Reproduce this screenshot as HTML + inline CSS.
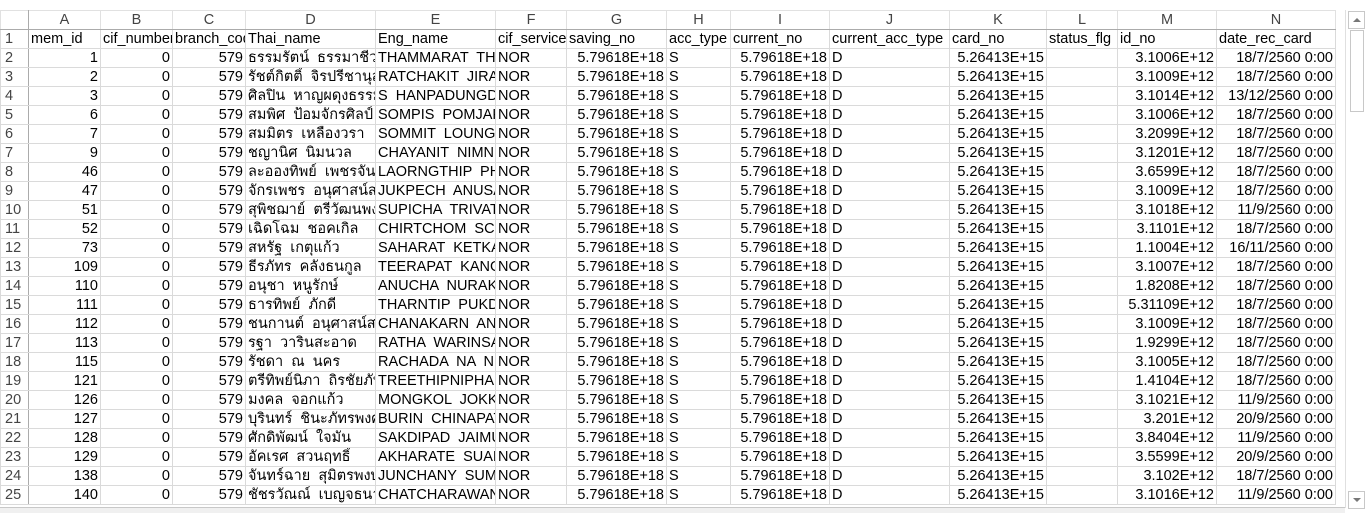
<!DOCTYPE html>
<html><head><meta charset="utf-8"><style>
html,body{margin:0;height:512px;}
body{background:#fff;width:1366px;overflow:hidden;position:relative;font-family:"Liberation Sans","Noto Sans CJK SC",sans-serif;}
table{position:absolute;left:0;top:10px;border-collapse:collapse;table-layout:fixed;width:1335px;font-size:14.5px;color:#000;}
td{height:18px;padding:0 2px;border:1px solid #dadada;white-space:pre;overflow:hidden;line-height:18px;}
tr.h td{background:#fff;color:#444;text-align:center;height:17px;border-color:#e1e1e1;border-bottom:1px solid #ababab;}
td.rh{color:#444;text-align:left;padding-left:4px;border-right:1px solid #ababab;}
.r{text-align:right}
#vs{position:absolute;left:1345px;top:10px;width:20px;height:498px;background:#fff;border-left:1px solid #e0e0e0}
#bar{position:absolute;left:0;top:507px;width:1345px;height:5px;background:#f0f0f0;border-top:1px solid #c8c8c8}
</style></head><body>
<table>
<colgroup><col style="width:28px"><col style="width:72px"><col style="width:72px"><col style="width:73px"><col style="width:130px"><col style="width:120px"><col style="width:71px"><col style="width:100px"><col style="width:64px"><col style="width:99px"><col style="width:120px"><col style="width:97px"><col style="width:71px"><col style="width:99px"><col style="width:119px"></colgroup>
<tr class="h"><td style="border-right:1px solid #ababab"></td><td>A</td><td>B</td><td>C</td><td>D</td><td>E</td><td>F</td><td>G</td><td>H</td><td>I</td><td>J</td><td>K</td><td>L</td><td>M</td><td>N</td></tr>
<tr><td class="rh">1</td><td>mem_id</td><td>cif_number</td><td>branch_code</td><td>Thai_name</td><td>Eng_name</td><td>cif_service</td><td>saving_no</td><td>acc_type</td><td>current_no</td><td>current_acc_type</td><td>card_no</td><td>status_flg</td><td>id_no</td><td>date_rec_card</td></tr>
<tr><td class="rh">2</td><td class="r">1</td><td class="r">0</td><td class="r">579</td><td>ธรรมรัตน์  ธรรมาชีวะ</td><td>THAMMARAT  THAMMA</td><td>NOR</td><td class="r">5.79618E+18</td><td>S</td><td class="r">5.79618E+18</td><td>D</td><td class="r">5.26413E+15</td><td></td><td class="r">3.1006E+12</td><td class="r">18/7/2560 0:00</td></tr>
<tr><td class="rh">3</td><td class="r">2</td><td class="r">0</td><td class="r">579</td><td>รัชต์กิตติ์  จิรปรีชานุสรณ์</td><td>RATCHAKIT  JIRAP</td><td>NOR</td><td class="r">5.79618E+18</td><td>S</td><td class="r">5.79618E+18</td><td>D</td><td class="r">5.26413E+15</td><td></td><td class="r">3.1009E+12</td><td class="r">18/7/2560 0:00</td></tr>
<tr><td class="rh">4</td><td class="r">3</td><td class="r">0</td><td class="r">579</td><td>ศิลปิน  หาญผดุงธรรม</td><td>S  HANPADUNGDH</td><td>NOR</td><td class="r">5.79618E+18</td><td>S</td><td class="r">5.79618E+18</td><td>D</td><td class="r">5.26413E+15</td><td></td><td class="r">3.1014E+12</td><td class="r">13/12/2560 0:00</td></tr>
<tr><td class="rh">5</td><td class="r">6</td><td class="r">0</td><td class="r">579</td><td>สมพิศ  ป้อมจักรศิลป์</td><td>SOMPIS  POMJAKS</td><td>NOR</td><td class="r">5.79618E+18</td><td>S</td><td class="r">5.79618E+18</td><td>D</td><td class="r">5.26413E+15</td><td></td><td class="r">3.1006E+12</td><td class="r">18/7/2560 0:00</td></tr>
<tr><td class="rh">6</td><td class="r">7</td><td class="r">0</td><td class="r">579</td><td>สมมิตร  เหลืองวรา</td><td>SOMMIT  LOUNGW</td><td>NOR</td><td class="r">5.79618E+18</td><td>S</td><td class="r">5.79618E+18</td><td>D</td><td class="r">5.26413E+15</td><td></td><td class="r">3.2099E+12</td><td class="r">18/7/2560 0:00</td></tr>
<tr><td class="rh">7</td><td class="r">9</td><td class="r">0</td><td class="r">579</td><td>ชญานิศ  นิ่มนวล</td><td>CHAYANIT  NIMN</td><td>NOR</td><td class="r">5.79618E+18</td><td>S</td><td class="r">5.79618E+18</td><td>D</td><td class="r">5.26413E+15</td><td></td><td class="r">3.1201E+12</td><td class="r">18/7/2560 0:00</td></tr>
<tr><td class="rh">8</td><td class="r">46</td><td class="r">0</td><td class="r">579</td><td>ละอองทิพย์  เพชรจันทร์</td><td>LAORNGTHIP  PH</td><td>NOR</td><td class="r">5.79618E+18</td><td>S</td><td class="r">5.79618E+18</td><td>D</td><td class="r">5.26413E+15</td><td></td><td class="r">3.6599E+12</td><td class="r">18/7/2560 0:00</td></tr>
<tr><td class="rh">9</td><td class="r">47</td><td class="r">0</td><td class="r">579</td><td>จักรเพชร  อนุศาสน์สกุล</td><td>JUKPECH  ANUSA</td><td>NOR</td><td class="r">5.79618E+18</td><td>S</td><td class="r">5.79618E+18</td><td>D</td><td class="r">5.26413E+15</td><td></td><td class="r">3.1009E+12</td><td class="r">18/7/2560 0:00</td></tr>
<tr><td class="rh">10</td><td class="r">51</td><td class="r">0</td><td class="r">579</td><td>สุพิชฌาย์  ตรีวัฒนพงศ์</td><td>SUPICHA  TRIVAT</td><td>NOR</td><td class="r">5.79618E+18</td><td>S</td><td class="r">5.79618E+18</td><td>D</td><td class="r">5.26413E+15</td><td></td><td class="r">3.1018E+12</td><td class="r">11/9/2560 0:00</td></tr>
<tr><td class="rh">11</td><td class="r">52</td><td class="r">0</td><td class="r">579</td><td>เฉิดโฉม  ชอคเกิล</td><td>CHIRTCHOM  SCH</td><td>NOR</td><td class="r">5.79618E+18</td><td>S</td><td class="r">5.79618E+18</td><td>D</td><td class="r">5.26413E+15</td><td></td><td class="r">3.1101E+12</td><td class="r">18/7/2560 0:00</td></tr>
<tr><td class="rh">12</td><td class="r">73</td><td class="r">0</td><td class="r">579</td><td>สหรัฐ  เกตุแก้ว</td><td>SAHARAT  KETKA</td><td>NOR</td><td class="r">5.79618E+18</td><td>S</td><td class="r">5.79618E+18</td><td>D</td><td class="r">5.26413E+15</td><td></td><td class="r">1.1004E+12</td><td class="r">16/11/2560 0:00</td></tr>
<tr><td class="rh">13</td><td class="r">109</td><td class="r">0</td><td class="r">579</td><td>ธีรภัทร  คลังธนกูล</td><td>TEERAPAT  KANG</td><td>NOR</td><td class="r">5.79618E+18</td><td>S</td><td class="r">5.79618E+18</td><td>D</td><td class="r">5.26413E+15</td><td></td><td class="r">3.1007E+12</td><td class="r">18/7/2560 0:00</td></tr>
<tr><td class="rh">14</td><td class="r">110</td><td class="r">0</td><td class="r">579</td><td>อนุชา  หนูรักษ์</td><td>ANUCHA  NURAK</td><td>NOR</td><td class="r">5.79618E+18</td><td>S</td><td class="r">5.79618E+18</td><td>D</td><td class="r">5.26413E+15</td><td></td><td class="r">1.8208E+12</td><td class="r">18/7/2560 0:00</td></tr>
<tr><td class="rh">15</td><td class="r">111</td><td class="r">0</td><td class="r">579</td><td>ธารทิพย์  ภักดี</td><td>THARNTIP  PUKD</td><td>NOR</td><td class="r">5.79618E+18</td><td>S</td><td class="r">5.79618E+18</td><td>D</td><td class="r">5.26413E+15</td><td></td><td class="r">5.31109E+12</td><td class="r">18/7/2560 0:00</td></tr>
<tr><td class="rh">16</td><td class="r">112</td><td class="r">0</td><td class="r">579</td><td>ชนกานต์  อนุศาสน์สกุล</td><td>CHANAKARN  ANU</td><td>NOR</td><td class="r">5.79618E+18</td><td>S</td><td class="r">5.79618E+18</td><td>D</td><td class="r">5.26413E+15</td><td></td><td class="r">3.1009E+12</td><td class="r">18/7/2560 0:00</td></tr>
<tr><td class="rh">17</td><td class="r">113</td><td class="r">0</td><td class="r">579</td><td>รฐา  วารินสะอาด</td><td>RATHA  WARINSA</td><td>NOR</td><td class="r">5.79618E+18</td><td>S</td><td class="r">5.79618E+18</td><td>D</td><td class="r">5.26413E+15</td><td></td><td class="r">1.9299E+12</td><td class="r">18/7/2560 0:00</td></tr>
<tr><td class="rh">18</td><td class="r">115</td><td class="r">0</td><td class="r">579</td><td>รัชดา  ณ  นคร</td><td>RACHADA  NA  N</td><td>NOR</td><td class="r">5.79618E+18</td><td>S</td><td class="r">5.79618E+18</td><td>D</td><td class="r">5.26413E+15</td><td></td><td class="r">3.1005E+12</td><td class="r">18/7/2560 0:00</td></tr>
<tr><td class="rh">19</td><td class="r">121</td><td class="r">0</td><td class="r">579</td><td>ตรีทิพย์นิภา  ถิรชัยภัทร</td><td>TREETHIPNIPHA</td><td>NOR</td><td class="r">5.79618E+18</td><td>S</td><td class="r">5.79618E+18</td><td>D</td><td class="r">5.26413E+15</td><td></td><td class="r">1.4104E+12</td><td class="r">18/7/2560 0:00</td></tr>
<tr><td class="rh">20</td><td class="r">126</td><td class="r">0</td><td class="r">579</td><td>มงคล  จอกแก้ว</td><td>MONGKOL  JOKK</td><td>NOR</td><td class="r">5.79618E+18</td><td>S</td><td class="r">5.79618E+18</td><td>D</td><td class="r">5.26413E+15</td><td></td><td class="r">3.1021E+12</td><td class="r">11/9/2560 0:00</td></tr>
<tr><td class="rh">21</td><td class="r">127</td><td class="r">0</td><td class="r">579</td><td>บุรินทร์  ชินะภัทรพงศ์</td><td>BURIN  CHINAPAT</td><td>NOR</td><td class="r">5.79618E+18</td><td>S</td><td class="r">5.79618E+18</td><td>D</td><td class="r">5.26413E+15</td><td></td><td class="r">3.201E+12</td><td class="r">20/9/2560 0:00</td></tr>
<tr><td class="rh">22</td><td class="r">128</td><td class="r">0</td><td class="r">579</td><td>ศักดิพัฒน์  ใจมั่น</td><td>SAKDIPAD  JAIMU</td><td>NOR</td><td class="r">5.79618E+18</td><td>S</td><td class="r">5.79618E+18</td><td>D</td><td class="r">5.26413E+15</td><td></td><td class="r">3.8404E+12</td><td class="r">11/9/2560 0:00</td></tr>
<tr><td class="rh">23</td><td class="r">129</td><td class="r">0</td><td class="r">579</td><td>อัคเรศ  สวนฤทธิ์</td><td>AKHARATE  SUAN</td><td>NOR</td><td class="r">5.79618E+18</td><td>S</td><td class="r">5.79618E+18</td><td>D</td><td class="r">5.26413E+15</td><td></td><td class="r">3.5599E+12</td><td class="r">20/9/2560 0:00</td></tr>
<tr><td class="rh">24</td><td class="r">138</td><td class="r">0</td><td class="r">579</td><td>จันทร์ฉาย  สุมิตรพงษ์</td><td>JUNCHANY  SUMI</td><td>NOR</td><td class="r">5.79618E+18</td><td>S</td><td class="r">5.79618E+18</td><td>D</td><td class="r">5.26413E+15</td><td></td><td class="r">3.102E+12</td><td class="r">18/7/2560 0:00</td></tr>
<tr><td class="rh">25</td><td class="r">140</td><td class="r">0</td><td class="r">579</td><td>ชัชรวัณณ์  เบญจธนา</td><td>CHATCHARAWAN</td><td>NOR</td><td class="r">5.79618E+18</td><td>S</td><td class="r">5.79618E+18</td><td>D</td><td class="r">5.26413E+15</td><td></td><td class="r">3.1016E+12</td><td class="r">11/9/2560 0:00</td></tr>
</table>
<div id="vs">
<div style="position:absolute;left:2px;top:1px;width:15px;height:16px;border:1px solid #c8c8c8;background:#fff"><div style="position:absolute;left:4px;top:6px;width:0;height:0;border-left:4px solid transparent;border-right:4px solid transparent;border-bottom:4px solid #777"></div></div>
<div style="position:absolute;left:4px;top:20px;width:12px;height:80px;border:1px solid #c8c8c8;background:#fff"></div>
<div style="position:absolute;left:2px;top:481px;width:15px;height:16px;border:1px solid #c8c8c8;background:#fff"><div style="position:absolute;left:4px;top:6px;width:0;height:0;border-left:4px solid transparent;border-right:4px solid transparent;border-top:4px solid #777"></div></div>
</div>
<div id="bar"></div>
</body></html>
